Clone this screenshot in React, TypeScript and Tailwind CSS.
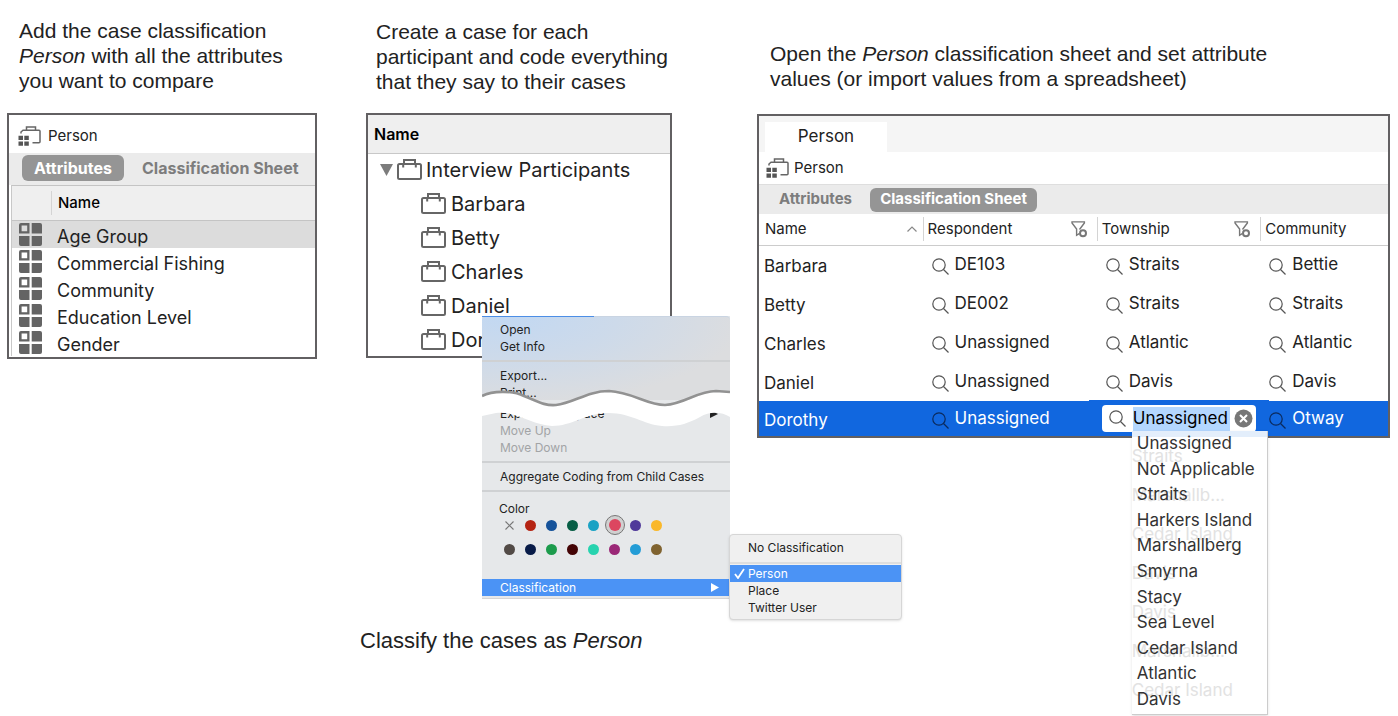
import React from "react";

const attributes = ["Age Group", "Commercial Fishing", "Community", "Education Level", "Gender"];
const participants = ["Barbara", "Betty", "Charles", "Daniel", "Dorothy"];

const sheet = [
  { name: "Barbara", values: ["DE103", "Straits", "Bettie"] },
  { name: "Betty", values: ["DE002", "Straits", "Straits"] },
  { name: "Charles", values: ["Unassigned", "Atlantic", "Atlantic"] },
  { name: "Daniel", values: ["Unassigned", "Davis", "Davis"] },
  { name: "Dorothy", values: ["Unassigned", "Unassigned", "Otway"] },
];

const townships = [
  "Unassigned",
  "Not Applicable",
  "Straits",
  "Harkers Island",
  "Marshallberg",
  "Smyrna",
  "Stacy",
  "Sea Level",
  "Cedar Island",
  "Atlantic",
  "Davis",
];
const fadedValues = ["Straits", "Marshallb...", "Cedar Island", "Davis", "Davis", "Marshallb...", "Cedar Island"];

const swatches = [
  { name: "Red", color: "bg-[#b52413]" },
  { name: "Blue", color: "bg-[#15529a]" },
  { name: "Green", color: "bg-[#075e45]" },
  { name: "Cyan", color: "bg-[#1ba2c4]" },
  { name: "Pink", color: "bg-[#dc4660]" },
  { name: "Purple", color: "bg-[#50399a]" },
  { name: "Yellow", color: "bg-[#fab82a]" },
  { name: "Gray", color: "bg-[#524a46]" },
  { name: "Navy", color: "bg-[#081b48]" },
  { name: "Emerald", color: "bg-[#1c9b4c]" },
  { name: "Maroon", color: "bg-[#440406]" },
  { name: "Turquoise", color: "bg-[#27d3af]" },
  { name: "Magenta", color: "bg-[#9b2877]" },
  { name: "Sky", color: "bg-[#239cd6]" },
  { name: "Brown", color: "bg-[#806330]" },
];

function CaseIcon() {
  return (
    <svg className="mb-[2px] shrink-0" width="25" height="21" viewBox="0 0 25 21" fill="none" stroke="#666" strokeWidth="2" aria-hidden="true">
      <rect x="1" y="5" width="23" height="15" rx="1.5" />
      <path d="M7 5V1h11v4M6.2 5v3.5M18.8 5v3.5" />
    </svg>
  );
}

function ClassificationIcon() {
  return (
    <svg className="shrink-0" width="23" height="21" viewBox="0 0 23 21" aria-hidden="true">
      <path d="M3 7.5V6l2-1.7h16q1 0 1 1v10.4q0 1-1 1h-6.5M8.5 4.3V1h9v3.3" fill="none" stroke="#666" strokeWidth="1.5" />
      <path d="M.5 9.7H5V14H.5zM6.3 9.7h4.5V14H6.3zM.5 15.5H5v4.3H.5zM6.3 15.5h4.5v4.3H6.3z" fill="#555" />
    </svg>
  );
}

function AttributeIcon() {
  return (
    <svg width="23" height="23" viewBox="0 0 23 23" fill="#646464" aria-hidden="true">
      <path fillRule="evenodd" d="M2 0h8.5v10.500H0V2q0-2 2-2zM2.6 2.6v5.6h5.6V2.6z" />
      <path d="M12.7 0H21q2 0 2 2v8.5H12.7zM0 12.9h10.5V23H2q-2 0-2-2zM12.7 12.9H23V21q0 2-2 2h-8.3z" />
    </svg>
  );
}

function SearchIcon({ dark }: { dark?: boolean }) {
  return (
    <svg
      className="shrink-0"
      width="17"
      height="17"
      viewBox="0 0 17 17"
      fill="none"
      stroke={dark ? "#0b2a5c" : "#555"}
      strokeWidth="1.2"
      aria-hidden="true"
    >
      <circle cx="7" cy="7" r="6.2" />
      <path d="m11.5 11.5 5 5" />
    </svg>
  );
}

function FilterIcon() {
  return (
    <svg width="17" height="17" viewBox="0 0 17 17" fill="none" stroke="#777" strokeWidth="1.4" aria-hidden="true">
      <path d="M8.5 8.5 13.4 2V.9H1V2l4.6 6v6.3l2.6-1.6" />
      <circle cx="12" cy="12.2" r="3" strokeWidth="2" />
    </svg>
  );
}

const menuRow = "block h-[17px] w-full pl-[18px] text-left leading-[17px]";

function MenuLine() {
  return (
    <div className="flex h-3 items-center">
      <hr className="w-full border-t-2 border-[#cfd1d3]" />
    </div>
  );
}

function ContextMenu() {
  return (
    <div
      role="menu"
      className="absolute top-[203px] left-[116px] w-[248px] border-b border-[#d5d5d5] bg-[#e6e8ea] text-xs text-[#222]"
    >
      <div className="h-[84px] rounded-t border-t border-[#c9d4e2] bg-[radial-gradient(ellipse_at_10%_0%,#c2d8f2_0%,#cddaea_35%,#dcdddf_75%)] pt-[3px]">
        <div className="-mt-1 h-px w-28 bg-[#4c8ee6]" />
        <button role="menuitem" className={menuRow + " mt-1"}>Open</button>
        <button role="menuitem" className={menuRow}>Get Info</button>
        <MenuLine />
        <button role="menuitem" className={menuRow}>Export...</button>
        <button role="menuitem" className={menuRow}>Print...</button>
      </div>
      <div className="h-[5px]" />
      <button role="menuitem" className="flex h-[17px] w-full items-center justify-between pr-3 pl-[18px] leading-[17px]">
        Export Workspace
        <svg width="8" height="8" viewBox="0 0 8 8" aria-hidden="true">
          <path d="M0 0l8 4-8 4z" fill="#222" />
        </svg>
      </button>
      <button role="menuitem" disabled className={menuRow + " text-[#a2a4a6]"}>Move Up</button>
      <button role="menuitem" disabled className={menuRow + " text-[#a2a4a6]"}>Move Down</button>
      <MenuLine />
      <button role="menuitem" className={menuRow}>Aggregate Coding from Child Cases</button>
      <MenuLine />
      <p className="mt-[3px] h-[13px] pl-[17px] leading-[17px]">Color</p>
      <div className="ml-[17px] grid w-[168px] grid-cols-8">
        <button aria-label="No color" className="flex h-6 w-[21px] items-center justify-center">
          <svg width="9" height="9" viewBox="0 0 9 9" stroke="#777" strokeWidth="1.1" aria-hidden="true">
            <path d="M.5.5l8 8M8.5.5l-8 8" />
          </svg>
        </button>
        {swatches.map((s) => (
          <button key={s.name} aria-label={s.name} className="flex h-6 w-[21px] items-center justify-center">
            {s.name === "Pink" ? (
              <span className="flex size-5 shrink-0 items-center justify-center rounded-full border border-[#777] bg-[#d0d0d0]">
                <span className={"size-3 rounded-full " + s.color} />
              </span>
            ) : (
              <span className={"size-[11px] rounded-full " + s.color} />
            )}
          </button>
        ))}
      </div>
      <button
        role="menuitem"
        className="mt-[18px] mb-[2px] flex h-[17px] w-full items-center justify-between bg-[#4b93f5] pr-[11px] pl-[18px] leading-[17px] text-white"
      >
        Classification
        <svg width="8" height="9" viewBox="0 0 8 9" aria-hidden="true">
          <path d="M0 0l8 4.5L0 9z" fill="#fff" />
        </svg>
      </button>

      <svg className="absolute top-[72px] left-0" width="248" height="40" viewBox="0 0 248 40" aria-hidden="true">
        <path
          d="M0 8C10 3 30 2 42 8C55 13 62 18 74 17C92 15 105 3 127 3C150 4 165 17 183 17C203 16 215 3 234 3L248 4V29C240 24 228 23 218 29C205 36 195 39 180 38C160 36 148 24 124 25C102 26 90 38 70 38C50 37 35 23 14 25L0 28z"
          fill="#fff"
        />
        <path
          d="M0 8C10 3 30 2 42 8C55 13 62 18 74 17C92 15 105 3 127 3C150 4 165 17 183 17C203 16 215 3 234 3L248 4"
          fill="none"
          stroke="#929292"
          strokeWidth="2.6"
        />
      </svg>

      <div
        role="menu"
        className="absolute top-[218px] left-[247px] w-[173px] rounded border border-[#d6d6d6] bg-[#f0f0f0] pt-1 pb-[3px] shadow-sm"
      >
        <button role="menuitem" className={menuRow}>No Classification</button>
        <div className="flex h-2 items-end">
          <hr className="w-full border-t-2 border-[#dedede]" />
        </div>
        <button role="menuitem" className="mt-px flex h-[17px] w-full items-center gap-[3px] bg-[#4b93f5] pl-1 leading-[17px] text-white">
          <svg width="11" height="11" viewBox="0 0 11 11" fill="none" stroke="#fff" strokeWidth="1.8" aria-hidden="true">
            <path d="M1 6l3 4 6-9" />
          </svg>
          Person
        </button>
        <button role="menuitem" className={menuRow}>Place</button>
        <button role="menuitem" className={menuRow}>Twitter User</button>
      </div>
    </div>
  );
}

function TownshipEditor() {
  return (
    <div className="absolute -top-px -left-2 z-10 h-[36px] w-[180px] bg-[#1167df]">
      <div className="mt-[5px] ml-[13px] flex h-[27px] w-[154px] items-center rounded bg-white pl-[7px]">
        <SearchIcon />
        <input
          aria-label="Township"
          defaultValue="Unassigned"
          className="ml-[7px] h-6 w-[97px] bg-[#b3d7ff] text-[17px] text-black outline-none"
        />
        <button aria-label="Clear" className="ml-1">
          <svg width="19" height="19" viewBox="0 0 19 19" aria-hidden="true">
            <circle cx="9.5" cy="9.5" r="9" fill="#777" />
            <path d="M6 6l7 7M13 6l-7 7" stroke="#fff" strokeWidth="2" />
          </svg>
        </button>
      </div>
      <div className="absolute top-[31px] left-[43px] h-[284px] w-[136px] overflow-hidden border-r border-b border-[#ccc] bg-white shadow-sm">
        <div className="h-[6px] bg-[#e3eefb]" />
        <div aria-hidden="true" className="absolute inset-x-0 top-[15px] text-[#e2e2e2]">
          {fadedValues.map((v, i) => (
            <div key={i} className="h-[39px] leading-5">{v}</div>
          ))}
        </div>
        <ul
          role="listbox"
          aria-label="Township values"
          className="absolute inset-x-0 top-0 flex h-[281px] flex-col justify-between pl-[5px] text-[#333]"
        >
          {townships.map((t, i) => (
            <li key={t} role="option" aria-selected={i === 0} className="leading-[25px]">
              {t}
            </li>
          ))}
        </ul>
      </div>
    </div>
  );
}

const caption = "font-['Liberation_Sans',sans-serif] leading-[25px] whitespace-nowrap text-[#222]";
const frame = "border-2 border-[#626062] bg-white";

export default function App() {
  return (
    <main className="flex min-h-screen items-start bg-white pr-2 pl-[7px] font-[Inter,sans-serif] text-[#222]">
      <section className="min-w-0 flex-[310]">
        <p className={caption + " h-[113px] pt-[18px] pl-3 text-[21px]"}>
          Add the case classification
          <br />
          <em>Person</em> with all the attributes
          <br />
          you want to compare
        </p>
        <div className={frame + " h-[246px] overflow-hidden"}>
          <div className="flex h-[38px] items-center gap-[7px] pt-1 pl-[9px] text-[15px]">
            <ClassificationIcon />
            Person
          </div>
          <div className="flex h-[32px] items-start gap-[10px] bg-[#ebebeb] pt-[2px] pl-[13px] text-base font-bold">
            <button className="h-[26px] w-[102px] rounded-md bg-[#959595] text-white">Attributes</button>
            <button className="h-[26px] px-2 whitespace-nowrap text-[#7d7d7d]">Classification Sheet</button>
          </div>
          <div className="ml-[2px] border-l border-[#c8c8c8]">
            <div className="flex h-[36px] items-center border-y border-[#c4c4c4] bg-[#efefef] text-[15px] font-medium text-black">
              <span className="ml-[39px] flex h-6 items-center border-l border-[#d4d4d4] pl-[6px]">Name</span>
            </div>
            <ul className="text-lg">
              {attributes.map((a, i) => (
                <li key={a} className={(i === 0 ? "bg-[#dcdcdc] " : "") + "flex h-[27px] items-start gap-[15px] pt-[2px] pl-[7px]"}>
                  <AttributeIcon />
                  <span className="leading-7">{a}</span>
                </li>
              ))}
            </ul>
          </div>
        </div>
      </section>

      <section className="ml-[43px] min-w-0 flex-[312]">
        <p className={caption + " h-[113px] pt-[19px] pl-4 text-[21px]"}>
          Create a case for each
          <br />
          participant and code everything
          <br />
          that they say to their cases
        </p>
        <div className="relative ml-[6px]">
          <div className={frame + " h-[245px] overflow-hidden"}>
            <div className="flex h-[39px] items-center border-b border-[#c8c8c8] bg-[#efefef] pl-[6px] text-base font-semibold text-black">
              Name
            </div>
            <ul className="-mt-px text-xl leading-[34px]">
              <li>
                <button className="flex h-[34px] items-center gap-1 pl-3">
                  <svg width="13" height="12" viewBox="0 0 13 12" aria-hidden="true">
                    <path d="M0 0h13L6.500 12z" fill="#7c7c7c" />
                  </svg>
                  <CaseIcon />
                  <span className="whitespace-nowrap">Interview Participants</span>
                </button>
                <ul>
                  {participants.map((p) => (
                    <li key={p} className="flex h-[34px] items-center gap-[5px] pl-[53px]">
                      <CaseIcon />
                      {p}
                    </li>
                  ))}
                </ul>
              </li>
            </ul>
          </div>
          <ContextMenu />
        </div>
        <p className={caption + " mt-[270px] text-[22px]"}>
          Classify the cases as <em>Person</em>
        </p>
      </section>

      <section className="ml-[85px] min-w-0 flex-[633]">
        <p className={caption + " h-[114px] pt-[41px] pl-[13px] text-[21px]"}>
          Open the <em>Person</em> classification sheet and set attribute
          <br />
          values (or import values from a spreadsheet)
        </p>
        <div className={frame}>
          <div className="flex h-9 items-end bg-[#f5f5f5] pl-[6px]">
            <button className="h-[30px] w-[122px] bg-white text-[17px]">Person</button>
          </div>
          <div className="flex h-8 items-center gap-[5px] pl-[7px] text-[15px]">
            <ClassificationIcon />
            Person
          </div>
          <div className="flex h-[30px] items-center gap-[10px] border-t border-[#dedede] bg-[#ebebeb] pl-3 text-[15px] font-bold">
            <button className="px-2 text-[#7d7d7d]">Attributes</button>
            <button className="h-6 w-[167px] rounded-md bg-[#959595] whitespace-nowrap text-white">Classification Sheet</button>
          </div>
          <table className="w-full table-fixed border-collapse text-[17px]">
            <thead>
              <tr className="h-[31px] border-b border-[#ccc] text-left text-[15px]">
                <th className="w-[26%] p-0 font-normal">
                  <div className="flex items-center justify-between pr-[6px] pl-[6px]">
                    Name
                    <svg width="10" height="6" viewBox="0 0 10 6" fill="none" stroke="#888" strokeWidth="1.2" aria-hidden="true">
                      <path d="M.5 5.500 5 1l4.500 4.500" />
                    </svg>
                  </div>
                </th>
                {["Respondent", "Township", "Community"].map((h, i) => (
                  <th key={h} className={(i === 0 ? "w-[27.7%] " : i === 1 ? "w-[26%] " : "") + "p-0 font-normal"}>
                    <div className="flex h-6 items-center justify-between border-l border-[#d4d4d4] pr-[9px] pl-1">
                      {h}
                      {i < 2 && <FilterIcon />}
                    </div>
                  </th>
                ))}
              </tr>
            </thead>
            <tbody>
              {sheet.map((row, r) => {
                const selected = r === 4;
                return (
                  <tr key={row.name} className={selected ? "h-[35px] bg-[#1167df] text-white" : "h-[39px]"}>
                    <td className="p-0 pt-1 pl-[5px]">{row.name}</td>
                    {row.values.map((v, c) => (
                      <td key={c} className="relative p-0 pl-[9px]">
                        <div className="flex items-center gap-[6px]">
                          <span className="pt-1">
                            <SearchIcon dark={selected} />
                          </span>
                          {!(selected && c === 1) && <span>{v}</span>}
                        </div>
                        {selected && c === 1 && <TownshipEditor />}
                      </td>
                    ))}
                  </tr>
                );
              })}
            </tbody>
          </table>
        </div>
      </section>
    </main>
  );
}
